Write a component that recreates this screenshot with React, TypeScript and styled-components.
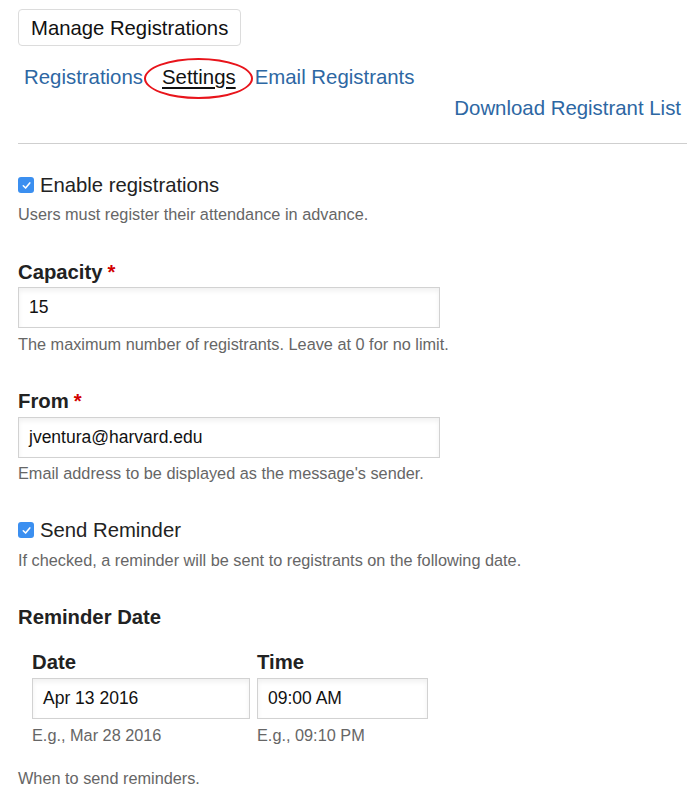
import React from "react";
import styled, { createGlobalStyle } from "styled-components";

const Global = createGlobalStyle`
  html, body { margin: 0; padding: 0; background: #fff; }
  body { font-family: "Liberation Sans", Arial, sans-serif; color: #222; }
  * { box-sizing: border-box; }
`;

const Page = styled.div`
  width: 698px;
  padding: 9px 11px 0 18px;
`;

const ManageButton = styled.button`
  height: 37px;
  padding: 1px 12px 0;
  border: 1px solid #dcdcdc;
  border-radius: 4px;
  background: #fff;
  font-family: inherit;
  font-size: 20.3px;
  color: #111;
  display: block;
`;

const Nav = styled.nav`
  margin-top: 19px;
  display: flex;
  flex-direction: column;
`;

const NavRow = styled.div`
  display: flex;
  gap: 12px;
  padding-left: 6px;
  line-height: 24px;
`;

const NavLink = styled.a<{ $active?: boolean }>`
  position: relative;
  font-size: 20.4px;
  color: ${(p) => (p.$active ? "#111" : "#2d67a3")};
  text-decoration: ${(p) => (p.$active ? "underline" : "none")};
  text-underline-offset: 3px;
  padding: 0 ${(p) => (p.$active ? "7px" : "0")};
  cursor: pointer;
`;

const Circle = styled.span`
  position: absolute;
  left: -11px;
  right: -10px;
  top: -7px;
  bottom: -10px;
  border: 2.5px solid #e8141b;
  border-radius: 50%;
  pointer-events: none;
`;

const DownloadRow = styled.div`
  margin-top: 7px;
  display: flex;
  justify-content: flex-end;
  padding-right: 6px;
  line-height: 24px;
`;

const Divider = styled.hr`
  margin: 23px 0 0;
  border: 0;
  border-top: 1.5px solid #cfcfcf;
`;

const CheckRow = styled.label<{ $mt: number }>`
  margin-top: ${(p) => p.$mt}px;
  display: flex;
  align-items: center;
  gap: 6px;
  font-size: 20.3px;
  line-height: 24px;
  color: #222;
`;

const Box = styled.span`
  width: 16px;
  height: 16px;
  border-radius: 3px;
  background: #3b8ff0;
  display: inline-flex;
  align-items: center;
  justify-content: center;
`;

const Help = styled.div<{ $mt: number }>`
  margin-top: ${(p) => p.$mt}px;
  font-size: 16.3px;
  line-height: 20px;
  color: #666;
`;

const Label = styled.div<{ $mt: number }>`
  margin-top: ${(p) => p.$mt}px;
  font-size: 20.3px;
  line-height: 24px;
  font-weight: bold;
  color: #222;
`;

const Req = styled.span`
  color: #d20000;
  margin-left: 5px;
`;

const Input = styled.div<{ $w: number; $mt?: number }>`
  margin-top: ${(p) => p.$mt ?? 3}px;
  width: ${(p) => p.$w}px;
  height: 41px;
  border: 1.5px solid #d2d2d2;
  box-shadow: inset 0 3px 5px rgba(0, 0, 0, 0.06);
  padding: 0 10px;
  display: flex;
  align-items: center;
  font-size: 17.5px;
  color: #111;
`;

const DateGrid = styled.div`
  margin-top: 21px;
  margin-left: 14px;
  display: grid;
  grid-template-columns: 218px 171px;
  column-gap: 7px;
`;

const Col = styled.div`
  display: flex;
  flex-direction: column;
`;

const Check = () => (
  <Box>
    <svg width="11" height="11" viewBox="0 0 12 12">
      <path d="M2.5 6.3 L5 8.8 L9.6 3.2" fill="none" stroke="#fff" strokeWidth="1.7" strokeLinecap="round" strokeLinejoin="round" />
    </svg>
  </Box>
);

export default function App() {
  return (
    <>
      <Global />
      <Page>
        <ManageButton>Manage Registrations</ManageButton>
        <Nav>
          <NavRow>
            <NavLink>Registrations</NavLink>
            <NavLink $active>
              Settings
              <Circle />
            </NavLink>
            <NavLink>Email Registrants</NavLink>
          </NavRow>
          <DownloadRow>
            <NavLink>Download Registrant List</NavLink>
          </DownloadRow>
        </Nav>
        <Divider />

        <CheckRow $mt={29}>
          <Check />
          Enable registrations
        </CheckRow>
        <Help $mt={7}>Users must register their attendance in advance.</Help>

        <Label $mt={36}>
          Capacity<Req>*</Req>
        </Label>
        <Input $w={422}>15</Input>
        <Help $mt={6}>The maximum number of registrants. Leave at 0 for no limit.</Help>

        <Label $mt={35}>
          From<Req>*</Req>
        </Label>
        <Input $w={422} $mt={4}>jventura@harvard.edu</Input>
        <Help $mt={5}>Email address to be displayed as the message's sender.</Help>

        <CheckRow $mt={35}>
          <Check />
          Send Reminder
        </CheckRow>
        <Help $mt={8}>If checked, a reminder will be sent to registrants on the following date.</Help>

        <Label $mt={35}>Reminder Date</Label>
        <DateGrid>
          <Col>
            <Label $mt={0}>Date</Label>
            <Input $w={218} $mt={4}>Apr 13 2016</Input>
            <Help $mt={6}>E.g., Mar 28 2016</Help>
          </Col>
          <Col>
            <Label $mt={0}>Time</Label>
            <Input $w={171} $mt={4}>09:00 AM</Input>
            <Help $mt={6}>E.g., 09:10 PM</Help>
          </Col>
        </DateGrid>
        <Help $mt={23}>When to send reminders.</Help>
      </Page>
    </>
  );
}
